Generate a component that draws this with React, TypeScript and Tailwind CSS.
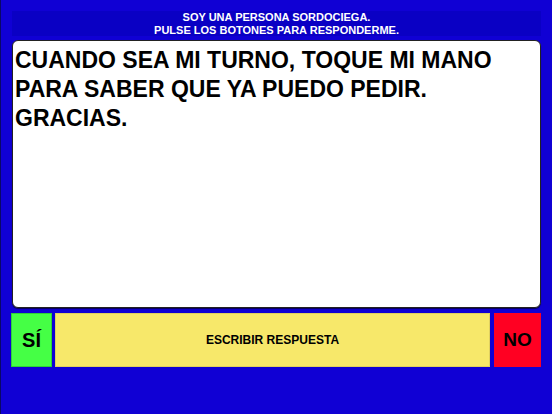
export default function App() {
  return (
    <div className="w-[552px] h-[414px] bg-[#1000d4] border-l border-l-[#0a0866] flex flex-col pl-[10px] pr-[11px] pt-[11px]" style={{ fontFamily: '"Liberation Sans", Arial, sans-serif' }}>
      <div className="ml-[1px] h-[25px] bg-[#0a00c4] flex flex-col items-center justify-center text-white font-bold text-[11px] leading-[13px]">
        <div>SOY UNA PERSONA SORDOCIEGA.</div>
        <div>PULSE LOS BOTONES PARA RESPONDERME.</div>
      </div>
      <div className="ml-[1px] mt-[4px] h-[268px] bg-white rounded-[6px] border border-[#222] shadow-[0_1px_1px_rgba(0,0,0,0.6)] px-[2px] pt-[5px]">
        <div className="text-black font-bold text-[23px] leading-[29px] whitespace-nowrap">
          <div>CUANDO SEA MI TURNO, TOQUE MI MANO</div>
          <div>PARA SABER QUE YA PUEDO PEDIR.</div>
          <div>GRACIAS.</div>
        </div>
      </div>
      <div className="mt-[5px] h-[54px] flex">
        <div className="w-[41px] bg-[#45ff45] border border-[#2fcf3a] flex items-center justify-center text-black font-bold text-[20px]">SÍ</div>
        <div className="ml-[3px] w-[435px] bg-[#f7e86a] border border-[#e0d060] flex items-center justify-center text-black font-bold text-[12px]">ESCRIBIR RESPUESTA</div>
        <div className="ml-[4px] w-[47px] bg-[#ff0022] flex items-center justify-center text-black font-bold text-[19px]">NO</div>
      </div>
    </div>
  );
}
